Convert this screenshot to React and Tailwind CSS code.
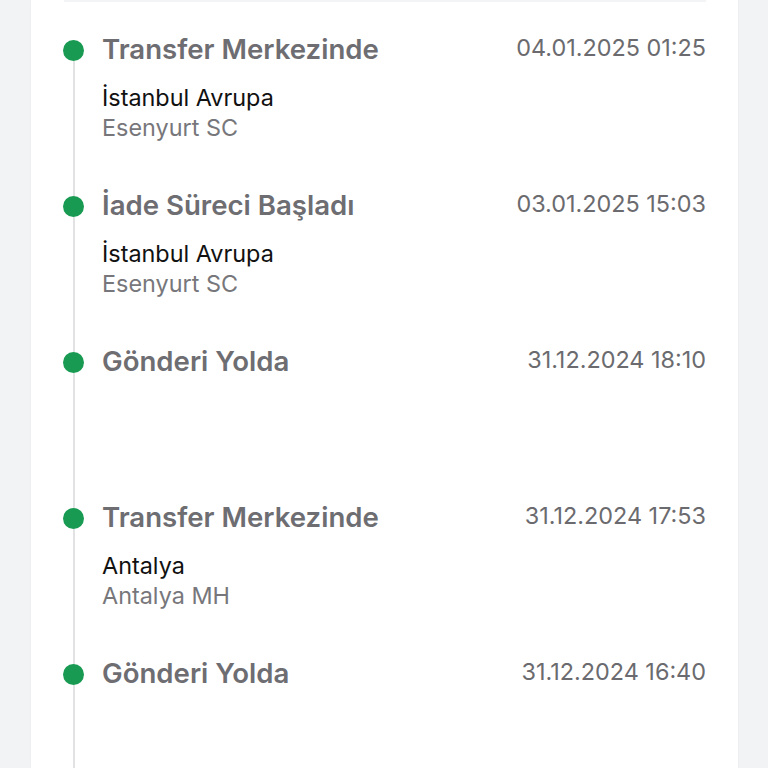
import React from "react";

const items = [
  { title: "Transfer Merkezinde", date: "04.01.2025 01:25", city: "İstanbul Avrupa", branch: "Esenyurt SC" },
  { title: "İade Süreci Başladı", date: "03.01.2025 15:03", city: "İstanbul Avrupa", branch: "Esenyurt SC" },
  { title: "Gönderi Yolda", date: "31.12.2024 18:10" },
  { title: "Transfer Merkezinde", date: "31.12.2024 17:53", city: "Antalya", branch: "Antalya MH" },
  { title: "Gönderi Yolda", date: "31.12.2024 16:40" },
];

export default function App() {
  return (
    <div className="min-h-screen bg-[#f2f3f5] flex" style={{ fontFamily: "Inter, 'Noto Sans', sans-serif" }}>
      <div className="ml-[31px] w-[707px] bg-white min-h-[768px] h-[768px] overflow-hidden px-[32px] shadow-[0_0_2px_rgba(0,0,0,0.06)]">
        <div className="ml-[1px] h-[2px] bg-[#f3f4f6]" />
        <div className="pt-[32px] flex flex-col">
          {items.map((it, i) => (
            <div key={i} className="flex h-[156px]">
              <div className="w-[21px] flex flex-col items-center shrink-0">
                <div className={i === 0 ? "h-[6px] w-[2px]" : "h-[6px] w-[2px] bg-[#e2e2e4]"} />
                <div className="w-[21px] h-[21px] rounded-full bg-[#199a52] shrink-0" />
                <div className="flex-1 w-[2px] bg-[#e2e2e4]" />
              </div>
              <div className="ml-[18px] flex-1 flex flex-col">
                <div className="flex items-center justify-between h-[32px]">
                  <span className="text-[27.6px] font-semibold text-[#6d6d72]">{it.title}</span>
                  <span className="text-[23.4px] text-[#6b6b6f] -mt-[4px]">{it.date}</span>
                </div>
                {it.city && (
                  <div className="mt-[17px] flex flex-col">
                    <span className="text-[23.4px] leading-[30px] text-[#111111]">{it.city}</span>
                    <span className="text-[23.4px] leading-[30px] text-[#77777b]">{it.branch}</span>
                  </div>
                )}
              </div>
            </div>
          ))}
        </div>
      </div>
    </div>
  );
}
